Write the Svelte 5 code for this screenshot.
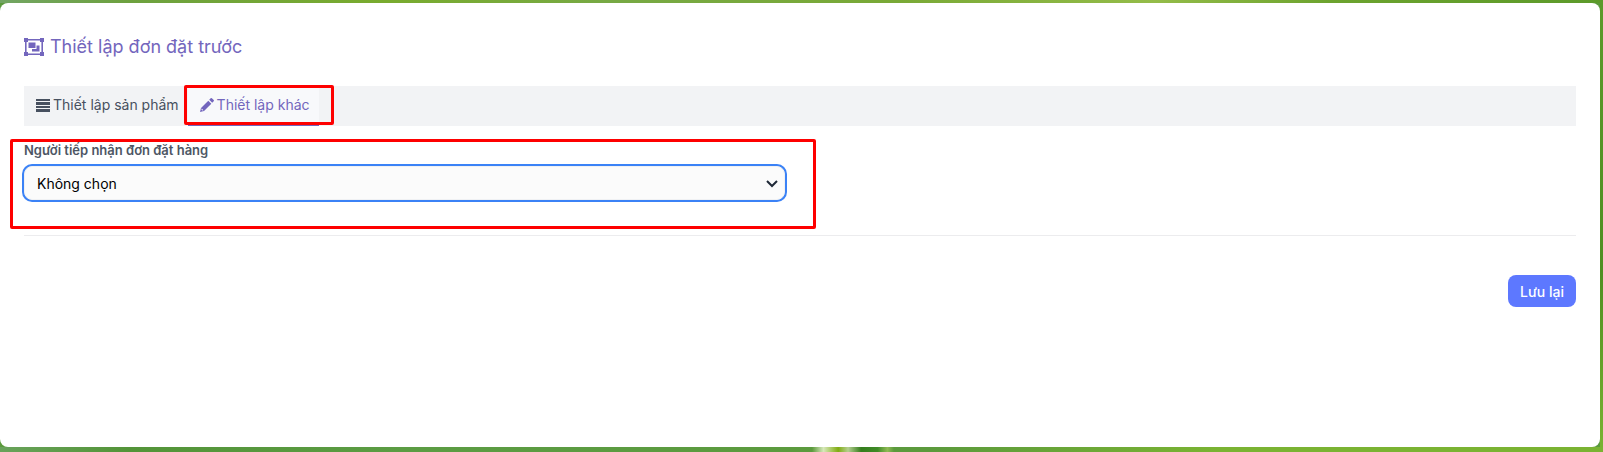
<script>
  let activeTab = $state("other");
  let receiver = $state("");

  function selectTab(e, tab) {
    e.preventDefault();
    activeTab = tab;
  }
</script>

<main class="page">
  <section class="card">
    <h1 class="title">
      <svg class="title-icon" viewBox="0 0 20 18" aria-hidden="true">
        <path fill-rule="evenodd" d="M0 0h4v1h12V0h4v4h-1v10h1v4h-4v-1H4v1H0v-4h1V4H0zM4 2.600v1.400H2.600v10H4v1.400h12V14h1.400V4H16V2.600z" />
        <path d="M4.500 4.500h7v5.500h-7zM12.500 7.500h3v6H8V11h4.500z" />
      </svg>
      <span>Thiết lập đơn đặt trước</span>
    </h1>

    <nav class="tabs">
      <a href="#product" class="tab" class:active={activeTab === "product"} onclick={(e) => selectTab(e, "product")}>
        <svg class="tab-icon" viewBox="0 0 14 14" aria-hidden="true">
          <path d="M0 1h14v2H0zM0 4h14v3H0zM0 8h14v2H0zM0 11h14v3H0z" />
        </svg>
        <span>Thiết lập sản phẩm</span>
      </a>
      <div class="marked">
        <a href="#other" class="tab" class:active={activeTab === "other"} onclick={(e) => selectTab(e, "other")}>
          <svg class="tab-icon" viewBox="0 0 14 14" aria-hidden="true">
            <path d="M0 14l1-4L8.300 2.700l3 3L4 13zM9.200 1.800L10.700.300q.6-.5 1.200 0l1.800 1.800q.5.600 0 1.200L12.200 4.800z" />
            <path class="tip" d="M1.700 10.600l1.700 1.700-.9.300-1.100-1.100z" />
          </svg>
          <span>Thiết lập khác</span>
        </a>
        <div class="highlight highlight-tab"></div>
      </div>
    </nav>

    <form onsubmit={(e) => e.preventDefault()}>
      <div class="form-group">
        <label for="receiver">Người tiếp nhận đơn đặt hàng</label>
        <div class="select-wrap">
          <select id="receiver" bind:value={receiver}>
            <option value="">Không chọn</option>
          </select>
          <svg class="chevron" viewBox="0 0 12 8" aria-hidden="true">
            <path d="M1 1l5 5 5-5" />
          </svg>
        </div>
        <div class="highlight highlight-group"></div>
      </div>

      <hr />

      <div class="actions">
        <button type="submit">Lưu lại</button>
      </div>
    </form>
  </section>
</main>

<style>
  :global(body) {
    background: #5b9a3c;
  }

  .page {
    box-sizing: border-box;
    min-height: 100vh;
    display: flex;
    padding: 3px 3px 5px 0;
    font-family: Inter, "Noto Sans", sans-serif;
    font-size: 14px;
    line-height: 20px;
    background:
      linear-gradient(90deg, #5b9a3c, #d7e8ba 14%, #80ac12 32%, #b5cf90 44%, #347d1c 60%, #3f8b27 80%, #8fba55 92%, #5b9a3c) 812px 100% / 82px 5px no-repeat,
      linear-gradient(90deg, #69a35b, #539438 8%, #5b9c43 25%, #5b9a3c 58%, #7ab332 76%, #7ab332) 0 100% / 100% 5px no-repeat,
      linear-gradient(90deg, #72a563, #6da13f 8%, #79ab2e 24%, #77a944 38%, #79a936 56%, #94bc49 72%, #6ca32e 83%, #5c9a2a) 0 0 / 100% 3px no-repeat,
      linear-gradient(#5c9a2a, #4f8f22 60%, #7ab332) 100% 0 / 3px 100% no-repeat;
  }

  .card {
    box-sizing: border-box;
    flex: 1;
    padding: 32px 24px 24px;
    border-radius: 8px;
    background: #fff;
  }

  .title {
    display: flex;
    align-items: center;
    gap: 6px;
    margin: 0 0 27px;
    color: #7366bd;
    font-size: 18px;
    font-weight: 400;
    line-height: 24px;
  }

  .title-icon {
    width: 20px;
    height: 18px;
    fill: currentColor;
  }

  .tabs {
    display: flex;
    background: #f2f3f5;
  }

  .tab {
    box-sizing: border-box;
    display: flex;
    align-items: center;
    gap: 3px;
    height: 40px;
    padding: 0 9px 0 12px;
    border-bottom: 2px solid transparent;
    color: #47505f;
    text-decoration: none;
  }

  .tab.active {
    border-bottom-color: #7366bd;
    background: #f8f9fb;
    color: #7366bd;
  }

  .tab-icon {
    width: 14px;
    height: 14px;
    fill: currentColor;
  }

  .tip {
    fill: #f8f9fb;
  }

  .marked,
  .form-group,
  .select-wrap {
    position: relative;
  }

  .highlight {
    position: absolute;
    border: 3px solid #fe0000;
    border-radius: 2px;
    pointer-events: none;
  }

  .highlight-tab {
    inset: -1px -15px 1px -4px;
  }

  .highlight-group {
    inset: -1px -31px -29px -14px;
  }

  .form-group {
    width: calc(50% - 15px);
    margin: 14px 0 35px;
  }

  label {
    display: block;
    margin-bottom: 5px;
    color: #4d5664;
    font-size: 13px;
    font-weight: 600;
    line-height: 21px;
  }

  select {
    display: block;
    box-sizing: border-box;
    width: 100%;
    height: 34px;
    padding: 2px 36px 0 12px;
    border: 1px solid #f0f1f3;
    border-radius: 8px;
    outline: none;
    box-shadow: 0 0 0 2px #3b82f6;
    background: #fbfbfb;
    color: #000;
    font: inherit;
    appearance: none;
  }

  .chevron {
    position: absolute;
    top: 14px;
    right: 7px;
    width: 12px;
    height: 8px;
    fill: none;
    stroke: #1f2937;
    stroke-width: 2;
    pointer-events: none;
  }

  hr {
    margin: 0 0 39px;
    border: 0;
    border-top: 1px solid #ececee;
  }

  .actions {
    display: flex;
    justify-content: flex-end;
  }

  button {
    height: 32px;
    padding: 2px 12px 0;
    border: 0;
    border-radius: 8px;
    background: #5d78ff;
    color: #fff;
    font: inherit;
    font-weight: 500;
    cursor: pointer;
  }
</style>
